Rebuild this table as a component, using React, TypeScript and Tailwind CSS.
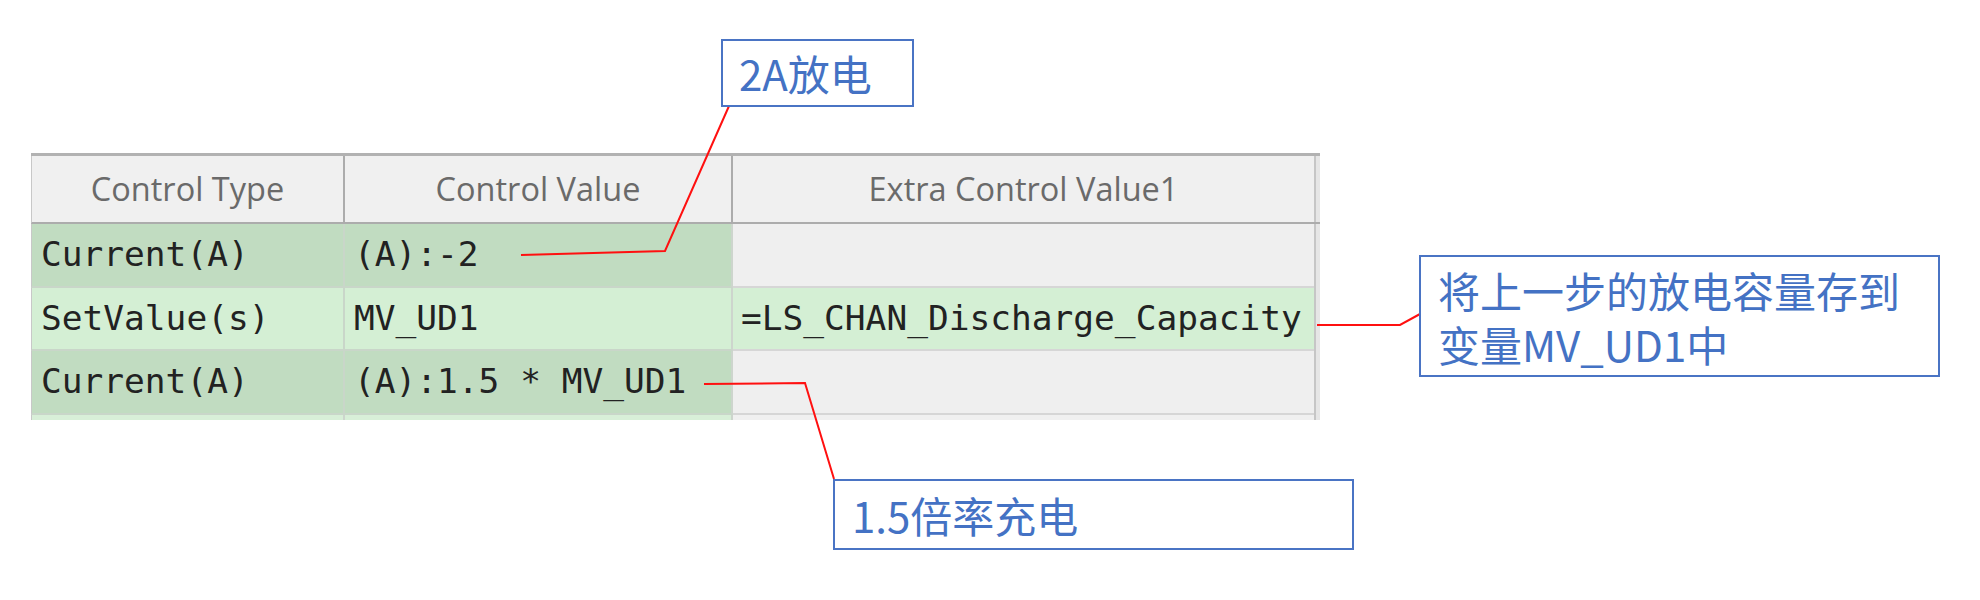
import React from "react";

const mono = "font-['DejaVu_Sans_Mono','Liberation_Mono',monospace] text-[34.5px] text-[#222222]";
const cjk = "font-['Noto_Sans_CJK_SC','Noto_Sans',sans-serif] text-[42px] text-[#4472c4] leading-[54px]";

function Row({
  a,
  b,
  c,
  dark,
  h,
}: {
  a: string;
  b: string;
  c: string;
  dark: boolean;
  h: string;
}) {
  const green = dark ? "bg-[#c1dcc1]" : "bg-[#d4efd4]";
  const third = dark ? "bg-[#efefef]" : "bg-[#d4efd4]";
  return (
    <div className={`flex ${h}`}>
      <div className={`w-[314px] ${green} border-l border-l-[#c8c8c8] border-r-2 border-r-[#c9d6c9] border-b-2 border-b-[#c9d6c9] flex items-center pl-[9px] ${mono} whitespace-pre`}>
        {a}
      </div>
      <div className={`w-[388px] ${green} border-r-2 border-r-[#cdd5cd] border-b-2 border-b-[#c9d6c9] flex items-center pl-[9px] ${mono} whitespace-pre`}>
        {b}
      </div>
      <div className={`w-[581px] ${third} border-b-2 border-b-[#d6d6d6] flex items-center pl-[8px] ${mono} whitespace-pre`}>
        {c}
      </div>
      <div className="w-[6px] flex">
        <div className="w-[2px] bg-[#c6c6c6]" />
        <div className="w-[4px] bg-[#e6e6e6]" />
      </div>
    </div>
  );
}

export default function App() {
  return (
    <div className="relative w-[1980px] h-[600px] bg-white overflow-hidden">
      <div className="pt-[153px] pl-[31px]">
        <div className="w-[1289px]">
          <div className="h-[3px] bg-[#b2b2b2]" />
          <div className="flex h-[68px] font-['Open_Sans',sans-serif] text-[32.5px] text-[#6a6a6a]">
            <div className="w-[314px] bg-[#f0f0f0] border-l border-l-[#c8c8c8] border-r-2 border-r-[#acacac] border-b-2 border-b-[#acacac] flex items-center justify-center">
              Control Type
            </div>
            <div className="w-[388px] bg-[#f0f0f0] border-r-2 border-r-[#acacac] border-b-2 border-b-[#acacac] flex items-center justify-center">
              Control Value
            </div>
            <div className="w-[581px] bg-[#f0f0f0] border-b-2 border-b-[#acacac] flex items-center justify-center">
              Extra Control Value1
            </div>
            <div className="w-[6px] flex border-b-2 border-b-[#acacac]">
              <div className="w-[2px] bg-[#c6c6c6]" />
              <div className="w-[4px] bg-[#e6e6e6]" />
            </div>
          </div>
          <Row a="Current(A)" b="(A):-2" c="" dark h="h-[64px]" />
          <Row a="SetValue(s)" b="MV_UD1" c="=LS_CHAN_Discharge_Capacity" dark={false} h="h-[63px]" />
          <Row a="Current(A)" b="(A):1.5 * MV_UD1" c="" dark h="h-[64px]" />
          <div className="flex h-[5px]">
            <div className="w-[314px] bg-[#d8efd8] border-l border-l-[#c8c8c8] border-r-2 border-r-[#cdd5cd]" />
            <div className="w-[388px] bg-[#d8efd8] border-r-2 border-r-[#cdd5cd]" />
            <div className="w-[581px] bg-[#f0f0f0]" />
            <div className="w-[6px] flex">
              <div className="w-[2px] bg-[#c6c6c6]" />
              <div className="w-[4px] bg-[#e6e6e6]" />
            </div>
          </div>
        </div>
      </div>

      <svg
        className="absolute left-0 top-0 pointer-events-none"
        width="1980"
        height="600"
        viewBox="0 0 1980 600"
      >
        <polyline points="729,106 665,251 521,255" fill="none" stroke="#ff1010" strokeWidth="2" />
        <polyline points="1317,325 1400,325 1420,314" fill="none" stroke="#ff1010" strokeWidth="2" />
        <polyline points="704,384 805,383 834,479" fill="none" stroke="#ff1010" strokeWidth="2" />
      </svg>

      <div className={`absolute left-[721px] top-[39px] w-[193px] h-[68px] border-2 border-[#4a74c4] bg-white flex items-center pl-[16px] ${cjk}`}>
        2A放电
      </div>
      <div className={`absolute left-[1419px] top-[255px] w-[521px] h-[122px] border-2 border-[#4a74c4] bg-white pl-[17px] pt-[6px] ${cjk}`}>
        <div>将上一步的放电容量存到</div>
        <div>变量MV_UD1中</div>
      </div>
      <div className={`absolute left-[833px] top-[479px] w-[521px] h-[71px] border-2 border-[#4a74c4] bg-white flex items-center pl-[17px] ${cjk}`}>
        1.5倍率充电
      </div>
    </div>
  );
}
